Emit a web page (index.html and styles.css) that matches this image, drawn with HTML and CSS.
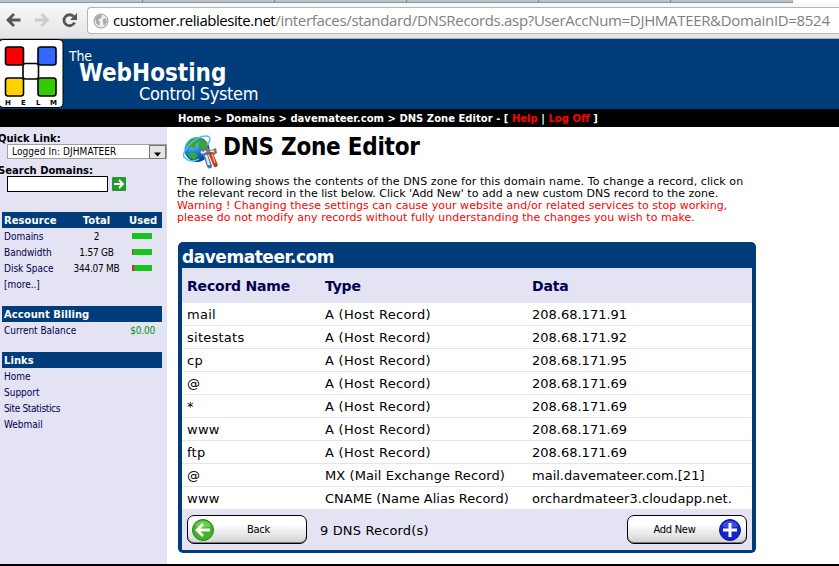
FILE: index.html
```html
<!DOCTYPE html>
<html lang="en">
<head>
<meta charset="utf-8">
<title>DNS Zone Editor</title>
<link rel="stylesheet" href="styles.css">
</head>
<body>
<div class="tabs"><i></i><i></i><i></i><i></i><i></i><i></i></div>
<div class="toolbar">
  <svg class="nav" width="87" height="30" viewBox="0 0 87 30" fill="none" stroke-width="2.800">
    <path d="M20.500 16H8.500M14 10L8 16L14 22" stroke="#555"/>
    <path d="M35 16H47M41.500 10L47.500 16L41.500 22" stroke="#ccc"/>
    <path d="M73.500 12.500A5.500 5.500 0 1 0 74.500 18.500" stroke="#555"/>
    <path d="M77 9V16H70Z" fill="#555"/>
  </svg>
  <div class="address">
    <svg width="16" height="16" viewBox="0 0 16 16"><circle cx="8" cy="8" r="7" fill="#eee" stroke="#999"/><path d="M2 5L5 2L9 2L8 5L5 7L7 9L6 13L3 10ZM10 6L13 5L14 9L11 13L10 10Z" fill="#aaa"/></svg>
    <span class="url"><b>customer.reliablesite.net</b>/interfaces/standard/DNSRecords.asp?UserAccNum=DJHMATEER&amp;DomainID=8524</span>
  </div>
</div>
<header class="banner">
  <svg class="logo" width="64" height="70" viewBox="0 0 64 70">
    <rect x="-1" y=".5" width="64" height="68" rx="4" fill="#fff" stroke="#000"/>
    <g stroke="#000" stroke-width="1.600">
      <rect x="5.500" y="8" width="18" height="18" rx="2.500" fill="#f70000"/>
      <rect x="38" y="8" width="18" height="18" rx="2.500" fill="#36f"/>
      <rect x="5.500" y="39" width="18" height="18" rx="2.500" fill="#ffd200"/>
      <rect x="38" y="39" width="18" height="18" rx="2.500" fill="#3c0"/>
      <rect x="23" y="24.500" width="15.500" height="15.500" rx="2.500" fill="#fff"/>
    </g>
    <g class="helm"><text x="5" y="66">H</text><text x="21" y="66">E</text><text x="36" y="66">L</text><text x="50" y="66">M</text></g>
  </svg>
  <div class="brand">
    <div class="brand-the">The</div>
    <div class="brand-web">WebHosting</div>
    <div class="brand-control">Control System</div>
  </div>
</header>
<nav class="crumbs">Home &gt; Domains &gt; davemateer.com &gt; DNS Zone Editor - [ <em>Help</em> | <em>Log Off</em> ]</nav>
<div class="page">
  <aside class="sidebar">
    <div class="label">Quick Link:</div>
    <div class="select"><span>Logged In: DJHMATEER</span><svg width="17" height="14" viewBox="0 0 17 14"><rect x=".5" y=".5" width="16" height="13" fill="#e4e4e4" stroke="#777"/><path d="M5 7.500H12L8.500 11.500Z" fill="#000"/></svg></div>
    <div class="label search-label">Search Domains:</div>
    <div class="search"><div class="field"></div>
      <svg width="14" height="14" viewBox="0 0 14 14"><rect width="14" height="14" rx="1" fill="#249a30"/><path d="M2 7H11M7 3L11 7L7 11" fill="none" stroke="#fff" stroke-width="2"/></svg>
    </div>
    <div class="bar res"><span>Resource</span><span class="mid">Total</span><span class="used">Used</span></div>
    <div class="line res"><span>Domains</span><span class="mid dark">2</span><span class="meter"></span></div>
    <div class="line res"><span>Bandwidth</span><span class="mid dark">1.57 GB</span><span class="meter low"></span></div>
    <div class="line res"><span>Disk Space</span><span class="mid dark">344.07 MB</span><span class="meter high"></span></div>
    <div class="line">[more..]</div>
    <div class="bar gap">Account Billing</div>
    <div class="line balance"><span>Current Balance</span><span class="money">$0.00</span></div>
    <div class="bar gap">Links</div>
    <div class="line">Home</div>
    <div class="line">Support</div>
    <div class="line site">Site Statistics</div>
    <div class="line">Webmail</div>
  </aside>
  <main class="content">
    <div class="heading">
      <svg width="38" height="36" viewBox="0 0 38 36">
        <defs><radialGradient id="sea" cx=".3" cy=".25" r=".8"><stop offset="0" stop-color="#7dd8ff"/><stop offset=".5" stop-color="#1686d8"/><stop offset="1" stop-color="#063c9a"/></radialGradient></defs>
        <circle cx="16" cy="15.500" r="12.500" fill="url(#sea)"/>
        <path d="M10 5L17 4L19 7L15 10L14 15L10 13L7 15L6 10ZM20 5L26 8L27 15L23 20L20 14L17 11ZM7 19L14 19L17 22L13 26L8 23Z" fill="#3fa62c"/>
        <path d="M4 24C-2 20 13 2 25 2C31 2 29 8 26 11M4 24C8 28 14 27 18 25" fill="none" stroke="#5cbbe8" stroke-width="1.500"/>
        <path d="M18 17L24 13L30 16L35 14L36 19L33 21L27 19L22 22Z" fill="#777"/>
        <path d="M20 18L23 19L25 17M29 18L33 17" fill="none" stroke="#eee" stroke-width="2"/>
        <path d="M24.500 21L28.500 32" stroke="#55779c" stroke-width="5" stroke-linecap="round"/><path d="M25 21L28 31" stroke="#d4e8f7" stroke-width="2.500"/>
        <path d="M30 20L34.500 31" stroke="#b64220" stroke-width="4.500" stroke-linecap="round"/><path d="M31 20L34 29" stroke="#ff9b62" stroke-width="1.500"/>
      </svg>
      <h1>DNS Zone Editor</h1>
    </div>
    <div class="intro">
      <div class="i1">The following shows the contents of the DNS zone for this domain name. To change a record, click on</div>
      <div class="i2">the relevant record in the list below. Click 'Add New' to add a new custom DNS record to the zone.</div>
      <div class="warn i3">Warning ! Changing these settings can cause your website and/or related services to stop working,</div>
      <div class="warn i4">please do not modify any records without fully understanding the changes you wish to make.</div>
    </div>
    <section class="zone">
      <h2>davemateer.com</h2>
      <div class="row head"><span>Record Name</span><span>Type</span><span>Data</span></div>
      <div class="row"><span>mail</span><span class="host">A (Host Record)</span><span>208.68.171.91</span></div>
      <div class="row"><span>sitestats</span><span class="host">A (Host Record)</span><span>208.68.171.92</span></div>
      <div class="row"><span>cp</span><span class="host">A (Host Record)</span><span>208.68.171.95</span></div>
      <div class="row"><span>@</span><span class="host">A (Host Record)</span><span>208.68.171.69</span></div>
      <div class="row"><span>*</span><span class="host">A (Host Record)</span><span>208.68.171.69</span></div>
      <div class="row"><span>www</span><span class="host">A (Host Record)</span><span>208.68.171.69</span></div>
      <div class="row"><span>ftp</span><span class="host">A (Host Record)</span><span>208.68.171.69</span></div>
      <div class="row"><span>@</span><span class="mx">MX (Mail Exchange Record)</span><span>mail.davemateer.com.[21]</span></div>
      <div class="row last"><span>www</span><span>CNAME (Name Alias Record)</span><span class="alias">orchardmateer3.cloudapp.net.</span></div>
      <div class="foot">
        <div class="btn"><svg width="24" height="24" viewBox="0 0 24 24"><circle cx="12" cy="12" r="10.500" fill="#3fb522" stroke="#238016"/><path d="M4 8A9 9 0 0 1 20 8Q12 12 4 8" fill="#68cd50"/><path d="M19 12H7M12 6L6 12L12 18" fill="none" stroke="#fff" stroke-width="2.800"/></svg><span>Back</span></div>
        <div class="count">9 DNS Record(s)</div>
        <div class="btn add"><span>Add New</span><svg width="24" height="24" viewBox="0 0 24 24"><circle cx="12" cy="12" r="10.500" fill="#1524d3" stroke="#101878"/><path d="M4 8A9 9 0 0 1 20 8Q12 12 4 8" fill="#3c4be0"/><path d="M12 5V19M5 12H19" stroke="#fff" stroke-width="3"/></svg></div>
      </div>
    </section>
  </main>
</div>
</body>
</html>
```
FILE: styles.css
```css
* { box-sizing: border-box; }
body { margin: 0; width: 839px; height: 566px; overflow: hidden; background: #fff; color: #000; font-family: "DejaVu Sans", Verdana, sans-serif; display: flex; flex-direction: column; }
svg { display: block; flex: none; }
span, div, nav { white-space: nowrap; }
.tabs { height: 3px; width: 793px; display: flex; background: #b9c1c9; border-bottom: 1px solid #8d959c; flex: none; padding-left: 11px; }
.tabs i { width: 132px; border-right: 1px solid #7e858b; }
.tabs i:last-child { display: none; }
.toolbar { height: 36px; flex: none; display: flex; background: linear-gradient(#f8f8f8, #e4e4e4); border-bottom: 1px solid #b0b0b0; padding-top: 4px; }
.nav { margin-top: -3px; }
.address { flex: 1; height: 27px; border: 1px solid #b4b4b4; border-right: 0; border-radius: 4px 0 0 4px; background: #fff; display: flex; align-items: center; padding-left: 5px; gap: 4px; }
.url { font: 15px/24px "Open Sans", "Noto Sans", sans-serif; color: #808080; letter-spacing: -.32px; margin-top: -2px; }
.url b { color: #000; font-weight: 400; letter-spacing: -.46px; }
.banner { height: 70px; flex: none; display: flex; background: #003c79; color: #fff; }
.helm text { font: bold 7px "DejaVu Sans", sans-serif; }
.brand { font-family: "DejaVu Sans Condensed", "DejaVu Sans", Tahoma, sans-serif; padding: 11px 0 0 5px; }
.brand-the { font-size: 14px; line-height: 13px; letter-spacing: -.2px; }
.brand-web { font-size: 24px; font-weight: bold; line-height: 20px; margin-left: 10px; }
.brand-control { font-size: 18px; line-height: 22px; margin-left: 70px; letter-spacing: -.35px; }
.crumbs { height: 18px; flex: none; background: #000; color: #fff; font-size: 10px; font-weight: bold; line-height: 19px; padding-left: 178px; letter-spacing: .025px; }
.crumbs em { color: #f00; font-style: normal; }
.page { height: 439px; flex: none; display: flex; border-bottom: 2px solid #000; }
.sidebar { width: 167px; background: #e4e3f3; padding-top: 5px; overflow: hidden; color: #000050; font: 10px/16px "DejaVu Sans Condensed", "DejaVu Sans", sans-serif; }
.label { font: bold 10px/13px "DejaVu Sans", sans-serif; color: #000; margin-left: -2px; }
.select { height: 15px; width: 160px; margin: -1px 0 0 7px; border: 1px solid #a0a0a0; background: #fff; display: flex; justify-content: space-between; line-height: 13px; padding-left: 4px; color: #000; letter-spacing: .08px; }
.search-label { margin-top: 5px; }
.search { display: flex; gap: 4px; margin: -1px 0 0 7px; align-items: center; }
.field { width: 101px; height: 16px; border: 1px solid #000; background: #fff; }
.bar { width: 160px; height: 16px; margin-left: 2px; padding-left: 2px; background: #003c79; color: #fff; font: bold 10px/17px "DejaVu Sans", sans-serif; letter-spacing: .05px; }
.bar.res { margin-top: 20px; }
.bar.gap { margin-top: 14px; }
.res { display: grid; grid-template-columns: 58px 69px 28px; align-items: center; }
.mid { text-align: center; }
.used { margin-left: -2px; }
.line { height: 16px; margin-left: 2px; padding-left: 2px; line-height: 18px; font-size: 10px; letter-spacing: -.02px; }
.site { letter-spacing: -.35px; }
.dark { color: #000; letter-spacing: -.25px; }
.meter { width: 20px; height: 6px; background: #15c51c; border-left: 0 solid #f02020; margin: -2px 0 0 1px; }
.low { border-left-width: 1px; }
.high { border-left-width: 2px; }
.balance { display: flex; width: 153px; justify-content: space-between; }
.money { color: #008c18; letter-spacing: -.2px; }
.content { flex: 1; padding-left: 10px; }
.heading { height: 49px; display: flex; padding: 7px 0 0 4px; }
.heading h1 { margin: -2px 0 0 4px; font: bold 24px/30px "DejaVu Sans Condensed", "DejaVu Sans", sans-serif; letter-spacing: -.26px; }
.intro { font-size: 11px; line-height: 12px; height: 66px; }
.i1 { letter-spacing: .08px; }
.i3, .i4 { letter-spacing: .04px; }
.warn { color: #f00; }
.zone { width: 578px; height: 311px; margin-left: 1px; border: 4px solid #003c79; border-top: 0; border-radius: 5px; background: #fff; }
.zone h2 { margin: 0; height: 26px; background: #003c79; color: #fff; font: bold 17px/30px "DejaVu Sans", sans-serif; letter-spacing: -.46px; }
.row { display: grid; grid-template-columns: 138px 207px 1fr; padding-left: 5px; height: 23px; line-height: 23px; border-bottom: 1px solid #e4e3f3; font-size: 13px; }
.row span:first-child { letter-spacing: .25px; }
.host { letter-spacing: .27px; }
.mx { letter-spacing: .1px; }
.alias { letter-spacing: .05px; }
.row.head { height: 35px; background: #e4e3f3; color: #000050; font-weight: bold; font-size: 14px; line-height: 36px; }
.row.head span { letter-spacing: -.2px; }
.last { border-bottom-color: #fff; height: 22px; }
.foot { height: 41px; background: #e4e3f3; display: flex; align-items: flex-start; padding: 6px 5px 0; font-size: 13px; }
.btn { width: 120px; height: 29px; display: flex; align-items: center; border: 1px solid #000; border-radius: 7px; background: linear-gradient(#fff 30%, #d2d2d2); box-shadow: inset 0 -1px #777; padding: 0 4px 0 3px; font: 11px "DejaVu Sans Condensed", "DejaVu Sans", sans-serif; letter-spacing: -.25px; }
.btn span { flex: 1; text-align: center; }
.count { margin: 0 auto 0 13px; line-height: 31px; letter-spacing: .15px; }
```
